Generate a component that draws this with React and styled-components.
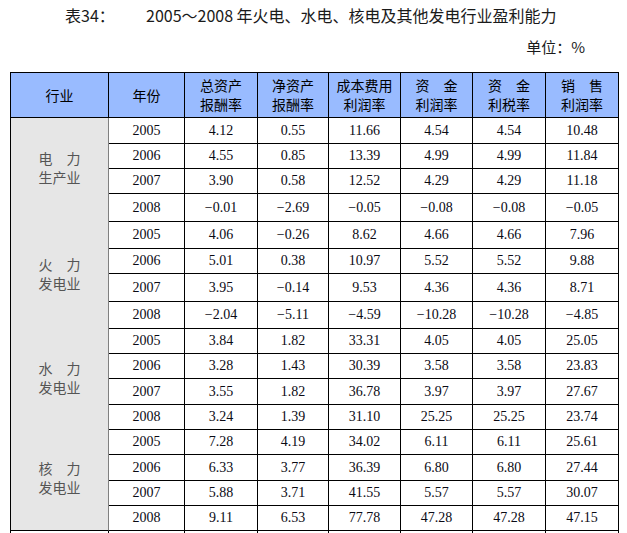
import React from "react";
import styled, { createGlobalStyle } from "styled-components";

const Global = createGlobalStyle`
  html, body { margin: 0; padding: 0; background: #fff; }
  body { width: 627px; height: 533px; overflow: hidden; }
`;

const Page = styled.div`
  display: flex;
  flex-direction: column;
  padding-top: 5px;
`;

const TitleRow = styled.div`
  display: flex;
  align-items: center;
  padding-left: 65px;
  height: 20px;
  font-family: "Noto Sans CJK SC", "Noto Sans", sans-serif;
  font-size: 16px;
  line-height: 20px;
  color: #1a1a1a;
`;

const TitleLabel = styled.span`
  width: 81px;
  flex: none;
`;

const TitleText = styled.span`
  white-space: nowrap;
`;

const Unit = styled.div`
  margin-top: 12px;
  height: 20px;
  line-height: 20px;
  text-align: right;
  padding-right: 42px;
  font-family: "Noto Sans CJK SC", "Noto Sans", sans-serif;
  font-size: 15px;
  color: #1a1a1a;
`;

const Grid = styled.div`
  margin-top: 15px;
  margin-left: 10px;
  display: grid;
  grid-template-columns: 98px 76px 73px 71px 72px 72px 73px 73px;
  grid-template-rows: 45px 26px 25px 25px 28px 27px 25px 28px 27px 25px 25px 26px 25px 25px 26px 25px 25px 12px;
  border-left: 1px solid #000;
  border-top: 1px solid #000;
  width: max-content;
`;

const HeadCell = styled.div`
  background: #99bbff;
  border-right: 1px solid #000;
  border-bottom: 1px solid #000;
  display: flex;
  flex-direction: column;
  align-items: center;
  justify-content: center;
  font-family: "Noto Sans CJK SC", "Noto Sans", sans-serif;
  font-size: 14px;
  line-height: 19px;
  color: #000;
  white-space: pre;
`;

const GroupCell = styled.div`
  grid-column: 1;
  background: #e6e6e6;
  border-right: 1px solid #808080;
  border-bottom: ${(p) => (p.$last ? "1px solid #000" : "none")};
  display: flex;
  flex-direction: column;
  align-items: center;
  justify-content: center;
  padding-bottom: 4px;
  font-family: "Noto Sans CJK SC", "Noto Sans", sans-serif;
  font-size: 14px;
  line-height: 19px;
  color: #555;
  white-space: pre;
`;

const Cell = styled.div`
  border-right: 1px solid #000;
  border-bottom: 1px solid #000;
  display: flex;
  align-items: center;
  justify-content: center;
  font-family: "Liberation Serif", "Times New Roman", serif;
  font-size: 14px;
  color: #0a0a14;
`;

const TailCell = styled.div`
  border-right: 1px solid #000;
`;

const headers = [
  ["行业"],
  ["年份"],
  ["总资产", "报酬率"],
  ["净资产", "报酬率"],
  ["成本费用", "利润率"],
  ["资\u3000金", "利润率"],
  ["资\u3000金", "利税率"],
  ["销\u3000售", "利润率"],
];

const groups = [
  {
    name: ["电\u3000力", "生产业"],
    rows: [
      ["2005", "4.12", "0.55", "11.66", "4.54", "4.54", "10.48"],
      ["2006", "4.55", "0.85", "13.39", "4.99", "4.99", "11.84"],
      ["2007", "3.90", "0.58", "12.52", "4.29", "4.29", "11.18"],
      ["2008", "\u22120.01", "\u22122.69", "\u22120.05", "\u22120.08", "\u22120.08", "\u22120.05"],
    ],
  },
  {
    name: ["火\u3000力", "发电业"],
    rows: [
      ["2005", "4.06", "\u22120.26", "8.62", "4.66", "4.66", "7.96"],
      ["2006", "5.01", "0.38", "10.97", "5.52", "5.52", "9.88"],
      ["2007", "3.95", "\u22120.14", "9.53", "4.36", "4.36", "8.71"],
      ["2008", "\u22122.04", "\u22125.11", "\u22124.59", "\u221210.28", "\u221210.28", "\u22124.85"],
    ],
  },
  {
    name: ["水\u3000力", "发电业"],
    rows: [
      ["2005", "3.84", "1.82", "33.31", "4.05", "4.05", "25.05"],
      ["2006", "3.28", "1.43", "30.39", "3.58", "3.58", "23.83"],
      ["2007", "3.55", "1.82", "36.78", "3.97", "3.97", "27.67"],
      ["2008", "3.24", "1.39", "31.10", "25.25", "25.25", "23.74"],
    ],
  },
  {
    name: ["核\u3000力", "发电业"],
    rows: [
      ["2005", "7.28", "4.19", "34.02", "6.11", "6.11", "25.61"],
      ["2006", "6.33", "3.77", "36.39", "6.80", "6.80", "27.44"],
      ["2007", "5.88", "3.71", "41.55", "5.57", "5.57", "30.07"],
      ["2008", "9.11", "6.53", "77.78", "47.28", "47.28", "47.15"],
    ],
  },
];

export default function App() {
  return (
    <>
      <Global />
      <Page>
        <TitleRow>
          <TitleLabel>表34：</TitleLabel>
          <TitleText>2005～2008 年火电、水电、核电及其他发电行业盈利能力</TitleText>
        </TitleRow>
        <Unit>单位：%</Unit>
        <Grid>
          {headers.map((h, i) => (
            <HeadCell key={"h" + i}>
              {h.map((line, j) => (
                <span key={j}>{line}</span>
              ))}
            </HeadCell>
          ))}
          {groups.map((g, gi) => (
            <React.Fragment key={"g" + gi}>
              <GroupCell $last={gi === groups.length - 1} style={{ gridRow: `${2 + gi * 4} / span 4` }}>
                {g.name.map((line, j) => (
                  <span key={j}>{line}</span>
                ))}
              </GroupCell>
              {g.rows.map((r, ri) =>
                r.map((v, ci) => (
                  <Cell key={`${gi}-${ri}-${ci}`} style={{ gridColumn: ci + 2, gridRow: 2 + gi * 4 + ri }}>
                    {v}
                  </Cell>
                ))
              )}
            </React.Fragment>
          ))}
          {Array.from({ length: 8 }).map((_, i) => (
            <TailCell key={"t" + i} />
          ))}
        </Grid>
      </Page>
    </>
  );
}
